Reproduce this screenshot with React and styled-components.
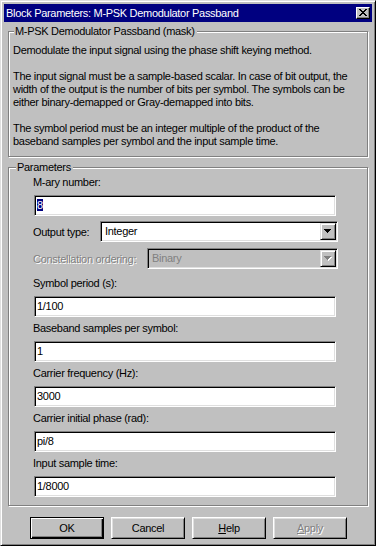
import React from 'react';
import styled, { createGlobalStyle } from 'styled-components';

const GlobalStyle = createGlobalStyle`
  html, body {
    margin: 0;
    padding: 0;
    background: #c0c0c0;
  }
  body {
    font-family: "Liberation Sans", Arial, sans-serif;
    font-size: 11px;
    letter-spacing: -0.3px;
    color: #000;
  }
  * { box-sizing: border-box; }
`;

const Window = styled.div`
  width: 376px;
  height: 546px;
  background: #c0c0c0;
  border: 1px solid;
  border-color: #dfdfdf #000 #000 #dfdfdf;
  box-shadow: inset 1px 1px 0 #fff, inset -1px -1px 0 #808080;
  padding: 3px;
  display: flex;
  flex-direction: column;
`;

const TitleBar = styled.div`
  height: 18px;
  background: #000080;
  color: #fff;
  display: flex;
  align-items: center;
  justify-content: space-between;
  padding: 0 2px 0 2px;
  line-height: 18px;
`;

const CloseButton = styled.div`
  width: 14px;
  height: 12px;
  background: #c0c0c0;
  border: 1px solid;
  border-color: #fff #000 #000 #fff;
  box-shadow: inset -1px -1px 0 #808080;
  display: flex;
  align-items: center;
  justify-content: center;
  padding: 0 1px 1px 0;
`;

const Group = styled.div`
  position: relative;
  margin: ${({ $top }) => $top}px 4px 0 4px;
  border: 1px solid #808080;
  box-shadow: inset 1px 1px 0 #fff, 1px 1px 0 #fff;
  padding: ${({ $pad }) => $pad};
`;

const Legend = styled.span`
  position: absolute;
  top: -7px;
  left: ${({ $left }) => $left}px;
  background: #c0c0c0;
  padding: 0 2px 0 1px;
  line-height: 13px;
  white-space: nowrap;
`;

const Para = styled.p`
  margin: 0;
  line-height: 13px;
  white-space: nowrap;
`;

const Label = styled.div`
  line-height: 13px;
  height: 13px;
  margin-top: ${({ $top }) => $top || 0}px;
  white-space: nowrap;
`;

const Field = styled.div`
  margin: ${({ $top }) => $top}px 2px 0 1px;
  height: 21px;
  background: #fff;
  border: 1px solid;
  border-color: #808080 #fff #fff #808080;
  box-shadow: inset 1px 1px 0 #000, inset -1px -1px 0 #dfdfdf;
  padding: 1px 2px 0 2px;
  line-height: 17px;
  white-space: nowrap;
`;

const Selected = styled.span`
  background: #000080;
  color: #fff;
`;

const Row = styled.div`
  display: flex;
  align-items: center;
  margin-top: ${({ $top }) => $top}px;
  height: 21px;
`;

const RowLabel = styled.span`
  width: ${({ $w }) => $w}px;
  flex: none;
  white-space: nowrap;
  color: ${({ $disabled }) => ($disabled ? '#808080' : '#000')};
  text-shadow: ${({ $disabled }) => ($disabled ? '1px 1px 0 #fff' : 'none')};
`;

const Select = styled.div`
  flex: 1;
  height: 21px;
  display: flex;
  align-items: stretch;
  background: ${({ $disabled }) => ($disabled ? '#c0c0c0' : '#fff')};
  color: ${({ $disabled }) => ($disabled ? '#808080' : '#000')};
  border: 1px solid;
  border-color: #808080 #fff #fff #808080;
  box-shadow: inset 1px 1px 0 #000, inset -1px -1px 0 #dfdfdf;
  padding: 1px 1px 1px 1px;
`;

const SelectText = styled.span`
  flex: 1;
  padding-left: 3px;
  line-height: 17px;
`;

const ArrowButton = styled.span`
  width: 16px;
  flex: none;
  background: #c0c0c0;
  border: 1px solid;
  border-color: #dfdfdf #000 #000 #dfdfdf;
  box-shadow: inset 1px 1px 0 #fff, inset -1px -1px 0 #808080;
  display: flex;
  align-items: center;
  justify-content: center;
`;

const ButtonRow = styled.div`
  display: flex;
  justify-content: center;
  gap: 7px;
  margin-top: 11px;
  padding-left: 1px;
`;

const Button = styled.div`
  width: 74px;
  height: 22px;
  display: flex;
  align-items: center;
  justify-content: center;
  border: 1px solid;
  border-color: ${({ $default }) => ($default ? '#000' : '#fff #000 #000 #fff')};
  box-shadow: ${({ $default }) =>
    $default
      ? 'inset 1px 1px 0 #fff, inset -1px -1px 0 #000, inset -2px -2px 0 #808080'
      : 'inset 1px 1px 0 #dfdfdf, inset -1px -1px 0 #808080'};
  color: ${({ $disabled }) => ($disabled ? '#808080' : '#000')};
  text-shadow: ${({ $disabled }) => ($disabled ? '1px 1px 0 #fff' : 'none')};
  padding-bottom: 1px;
`;

const xRows = [
  [0, 1, 6, 7],
  [1, 2, 5, 6],
  [2, 3, 4, 5],
  [3, 4],
  [2, 3, 4, 5],
  [1, 2, 5, 6],
  [0, 1, 6, 7],
];

const CloseIcon = () => (
  <svg width="8" height="7" shapeRendering="crispEdges">
    {xRows.map((row, y) =>
      row.map((x) => <rect key={`${x}-${y}`} x={x} y={y} width="1" height="1" fill="#000" />)
    )}
  </svg>
);

const Arrow = ({ disabled }) => (
  <svg width="8" height="5" shapeRendering="crispEdges">
    {disabled && (
      <g fill="#fff">
        {[0, 1, 2, 3].map((i) => (
          <rect key={i} x={i + 1} y={i + 1} width={7 - i * 2} height="1" />
        ))}
      </g>
    )}
    <g fill={disabled ? '#808080' : '#000'}>
      {[0, 1, 2, 3].map((i) => (
        <rect key={i} x={i} y={i} width={7 - i * 2} height="1" />
      ))}
    </g>
  </svg>
);

const fields = [
  { label: 'Symbol period (s):', value: '1/100', top: 8 },
  { label: 'Baseband samples per symbol:', value: '1', top: 5 },
  { label: 'Carrier frequency (Hz):', value: '3000', top: 5 },
  { label: 'Carrier initial phase (rad):', value: 'pi/8', top: 5 },
  { label: 'Input sample time:', value: '1/8000', top: 5 },
];

export default function App() {
  return (
    <>
      <GlobalStyle />
      <Window>
        <TitleBar>
          <span>Block Parameters: M-PSK Demodulator Passband</span>
          <CloseButton>
            <CloseIcon />
          </CloseButton>
        </TitleBar>

        <Group $top={9} $pad="12px 4px 8px 4px">
          <Legend $left={5}>M-PSK Demodulator Passband (mask)</Legend>
          <Para>Demodulate the input signal using the phase shift keying method.</Para>
          <Para>&nbsp;</Para>
          <Para>The input signal must be a sample-based scalar. In case of bit output, the</Para>
          <Para>width of the output is the number of bits per symbol. The symbols can be</Para>
          <Para>either binary-demapped or Gray-demapped into bits.</Para>
          <Para>&nbsp;</Para>
          <Para>The symbol period must be an integer multiple of the product of the</Para>
          <Para>baseband samples per symbol and the input sample time.</Para>
        </Group>

        <Group $top={10} $pad="8px 29px 8px 24px">
          <Legend $left={7}>Parameters</Legend>
          <Label>M-ary number:</Label>
          <Field $top={6}>
            <Selected>8</Selected>
          </Field>
          <Row $top={5}>
            <RowLabel $w={67}>Output type:</RowLabel>
            <Select>
              <SelectText>Integer</SelectText>
              <ArrowButton>
                <Arrow />
              </ArrowButton>
            </Select>
          </Row>
          <Row $top={6}>
            <RowLabel $w={114} $disabled>
              Constellation ordering:
            </RowLabel>
            <Select $disabled>
              <SelectText>Binary</SelectText>
              <ArrowButton>
                <Arrow disabled />
              </ArrowButton>
            </Select>
          </Row>
          {fields.map((f) => (
            <React.Fragment key={f.label}>
              <Label $top={f.top}>{f.label}</Label>
              <Field $top={6}>{f.value}</Field>
            </React.Fragment>
          ))}
        </Group>

        <ButtonRow>
          <Button $default>OK</Button>
          <Button>Cancel</Button>
          <Button>
            <span>
              <u>H</u>elp
            </span>
          </Button>
          <Button $disabled>
            <span>
              <u>A</u>pply
            </span>
          </Button>
        </ButtonRow>
      </Window>
    </>
  );
}
